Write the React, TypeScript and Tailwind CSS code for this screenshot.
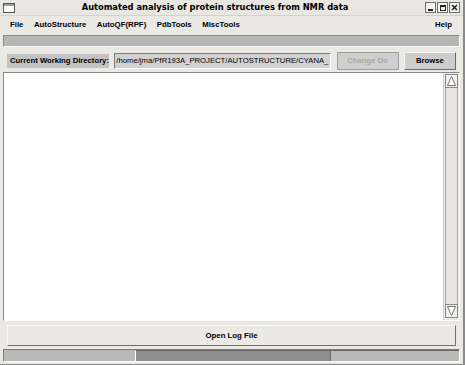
const menus = ["File", "AutoStructure", "AutoQF(RPF)", "PdbTools", "MiscTools"];

function WinButton({ children }: { children: React.ReactNode }) {
  return (
    <div className="flex h-[11px] w-[11px] items-center justify-center border border-[#6f6f6f] bg-[#f4f3ef] text-[#222]">
      {children}
    </div>
  );
}

export default function App() {
  return (
    <div
      className="flex h-[365px] w-[465px] flex-col border-r-2 border-b border-r-[#8a8a8a] border-b-[#8a8a8a] bg-[#ebe9e4] text-black"
      style={{ fontFamily: '"Liberation Sans", Arial, sans-serif' }}
    >
      {/* title bar */}
      <div className="relative flex h-[16px] items-center border-b border-[#d5d2cb] bg-[#e9e7e2] px-[3px]">
        <div className="flex h-[10px] w-[12px] flex-col border border-[#555] bg-white">
          <div className="h-[2px] bg-[#9a9a9a]" />
        </div>
        <div
          className="flex-1 pr-[10px] text-center text-[8.3px] font-bold"
          style={{ fontFamily: '"DejaVu Sans", sans-serif' }}
        >
          Automated analysis of protein structures from NMR data
        </div>
        <div className="flex gap-[1px]">
          <WinButton>
            <div className="mt-[5px] h-[2px] w-[5px] bg-[#222]" />
          </WinButton>
          <WinButton>
            <div className="h-[6px] w-[6px] border border-[#222] border-t-2" />
          </WinButton>
          <WinButton>
            <svg width="7" height="7" viewBox="0 0 7 7">
              <path d="M1 1 L6 6 M6 1 L1 6" stroke="#222" strokeWidth="1.6" />
            </svg>
          </WinButton>
        </div>
      </div>

      {/* menu bar */}
      <div className="flex h-[17px] items-center px-[10px] text-[7.8px] font-bold">
        <div className="flex gap-[10.5px]">
          {menus.map((m) => (
            <span key={m}>{m}</span>
          ))}
        </div>
        <span className="ml-auto pr-[1px]">Help</span>
      </div>

      {/* status strip */}
      <div className="mx-[3px] mt-[2px] h-[12px] border-t border-l border-t-[#8c8c8c] border-l-[#8c8c8c] border-b border-r border-b-white border-r-white bg-[#b6b6b6]" />

      {/* directory row */}
      <div className="mt-[4px] flex h-[19px] items-center px-[7px] text-[7.7px] whitespace-nowrap">
        <div className="flex h-[14px] w-[104px] items-center bg-[#c3c3c3] pl-[3px] font-bold">
          Current Working Directory:
        </div>
        <div className="ml-[5px] flex h-[16px] w-[220px] items-center overflow-hidden border border-t-[#7a7a7a] border-l-[#7a7a7a] border-b-white border-r-white bg-[#d2d2d2] pl-[1px]">
          /home/jma/PfR193A_PROJECT/AUTOSTRUCTURE/CYANA_
        </div>
        <div className="ml-[6px] flex h-[18px] w-[63px] items-center justify-center border border-[#9d9d9d] bg-[#cfcfcf] font-bold text-[#a9a9a9]">
          Change Dir
        </div>
        <div className="ml-[5px] flex h-[18px] w-[53px] items-center justify-center border border-t-[#f4f4f4] border-l-[#f4f4f4] border-b-[#6b6b6b] border-r-[#6b6b6b] bg-[#cdcdcd] font-bold">
          Browse
        </div>
      </div>

      {/* text area */}
      <div className="mx-[3px] mt-[2px] flex flex-1 border border-t-[#8a8a8a] border-l-[#8a8a8a] border-b-white border-r-white">
        <div className="flex-1 border-r border-[#d0cec8] bg-white" />
        <div className="flex w-[15px] flex-col bg-[#ebe9e4] px-[1px] pt-[1px] pb-[2px]">
          <svg width="13" height="14" viewBox="0 0 13 14">
            <rect x="0.5" y="0.5" width="12" height="13" fill="#efeeea" stroke="#8a8a8a" />
            <path d="M6.5 2.5 L10.5 11.5 L2.5 11.5 Z" fill="#fff" stroke="#777" />
          </svg>
          <div className="flex-1 border-x border-[#a9a9a9] bg-[#e8e6e1]" />
          <svg width="13" height="14" viewBox="0 0 13 14">
            <rect x="0.5" y="0.5" width="12" height="13" fill="#efeeea" stroke="#8a8a8a" />
            <path d="M2.5 2.5 L10.5 2.5 L6.5 11.5 Z" fill="#fff" stroke="#777" />
          </svg>
        </div>
      </div>

      {/* open log button */}
      <div className="mx-[7px] mt-[4px] flex h-[21px] items-center justify-center border border-t-[#fbfbfb] border-l-[#fbfbfb] border-b-[#707070] border-r-[#707070] bg-[#ebe9e4] text-[7.8px] font-bold">
        Open Log File
      </div>

      {/* bottom scale */}
      <div className="mx-[3px] mt-[3px] mb-[2px] flex h-[13px] border border-t-[#7a7a7a] border-l-[#7a7a7a] border-b-white border-r-white bg-[#b9b9b9]">
        <div className="w-[131px]" />
        <div className="w-[195px] border-l border-t border-l-white border-t-[#6a6a6a] bg-[#8d8d8d]" />
        <div className="flex-1 border-l border-t border-[#6a6a6a]" />
      </div>
    </div>
  );
}
